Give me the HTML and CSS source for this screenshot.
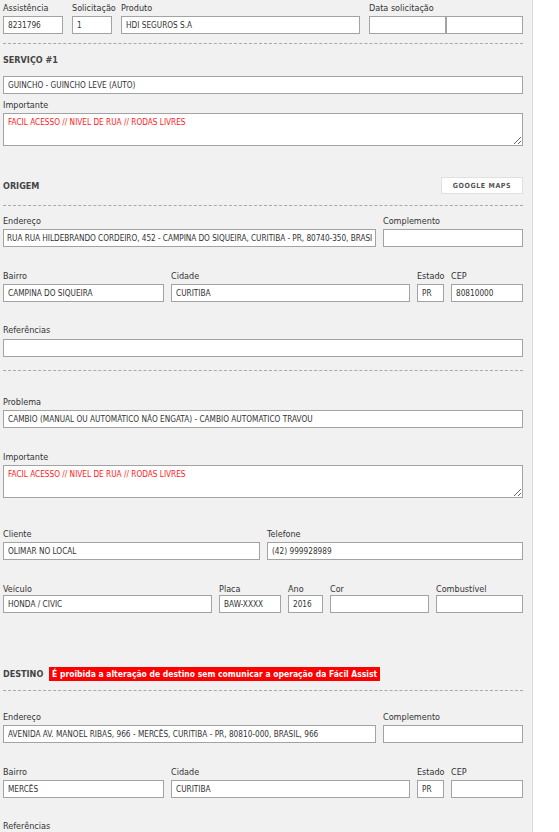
FILE: index.html
```html
<!DOCTYPE html>
<html lang="pt-BR">
<head>
    <meta charset="UTF-8">
    <meta name="viewport" content="width=device-width, initial-scale=1.0">
    <title>Atendimento</title>
    <link rel="stylesheet" href="styles.css">
</head>
<body>

    <div class="panel">
        <div class="row top">
            <div class="field w-assist">
                <label>Assistência</label>
                <input type="text" value="8231796" readonly>
            </div>
            <div class="field w-solic">
                <label>Solicitação</label>
                <input type="text" value="1" readonly>
            </div>
            <div class="field w-produto">
                <label>Produto</label>
                <input type="text" value="HDI SEGUROS S.A" readonly>
            </div>
            <div class="field grow">
                <label>Data solicitação</label>
                <div class="pair">
                    <input type="text" readonly>
                    <input type="text" readonly>
                </div>
            </div>
        </div>

        <hr class="dash after-top">

        <div class="section-title first">SERVIÇO #1</div>
        <input type="text" class="full" value="GUINCHO - GUINCHO LEVE (AUTO)" readonly>
        <div class="field mt-small">
            <label>Importante</label>
            <textarea class="alert" readonly>FACIL ACESSO // NIVEL DE RUA // RODAS LIVRES</textarea>
        </div>

        <div class="section-head">
            <span class="section-title">ORIGEM</span>
            <button class="maps">GOOGLE MAPS</button>
        </div>
        <hr class="dash">

        <div class="row m-9">
            <div class="field w-end">
                <label>Endereço</label>
                <input type="text" class="dense" value="RUA RUA HILDEBRANDO CORDEIRO, 452 - CAMPINA DO SIQUEIRA, CURITIBA - PR, 80740-350, BRASIL" readonly>
            </div>
            <div class="field grow">
                <label>Complemento</label>
                <input type="text" readonly>
            </div>
        </div>

        <div class="row m-23">
            <div class="field w-bairro">
                <label>Bairro</label>
                <input type="text" value="CAMPINA DO SIQUEIRA" readonly>
            </div>
            <div class="field grow">
                <label>Cidade</label>
                <input type="text" value="CURITIBA" readonly>
            </div>
            <div class="field w-uf">
                <label>Estado</label>
                <input type="text" value="PR" readonly>
            </div>
            <div class="field w-cep">
                <label>CEP</label>
                <input type="text" value="80810000" readonly>
            </div>
        </div>

        <div class="row m-22">
            <div class="field grow">
                <label class="loose">Referências</label>
                <input type="text" readonly>
            </div>
        </div>

        <hr class="dash spaced">

        <div class="row m-25">
            <div class="field grow">
                <label>Problema</label>
                <input type="text" value="CAMBIO (MANUAL OU AUTOMÁTICO NÃO ENGATA) - CAMBIO AUTOMATICO TRAVOU" readonly>
            </div>
        </div>

        <div class="row m-23">
            <div class="field grow">
                <label>Importante</label>
                <textarea class="alert" readonly>FACIL ACESSO // NIVEL DE RUA // RODAS LIVRES</textarea>
            </div>
        </div>

        <div class="row m-30">
            <div class="field w-cliente">
                <label>Cliente</label>
                <input type="text" value="OLIMAR NO LOCAL" readonly>
            </div>
            <div class="field grow">
                <label>Telefone</label>
                <input type="text" value="(42) 999928989" readonly>
            </div>
        </div>

        <div class="row m-23">
            <div class="field w-veiculo">
                <label class="tight">Veículo</label>
                <input type="text" value="HONDA / CIVIC" readonly>
            </div>
            <div class="field w-placa">
                <label class="tight">Placa</label>
                <input type="text" value="BAW-XXXX" readonly>
            </div>
            <div class="field w-ano">
                <label class="tight">Ano</label>
                <input type="text" value="2016" readonly>
            </div>
            <div class="field w-cor">
                <label class="tight">Cor</label>
                <input type="text" readonly>
            </div>
            <div class="field grow">
                <label class="tight">Combustível</label>
                <input type="text" readonly>
            </div>
        </div>

        <div class="section-head destino">
            <span class="section-title">DESTINO <span class="warn">É proibida a alteração de destino sem comunicar a operação da Fácil Assist</span></span>
        </div>
        <hr class="dash">

        <div class="row m-20">
            <div class="field w-end">
                <label>Endereço</label>
                <input type="text" value="AVENIDA AV. MANOEL RIBAS, 966 - MERCÊS, CURITIBA - PR, 80810-000, BRASIL, 966" readonly>
            </div>
            <div class="field grow">
                <label>Complemento</label>
                <input type="text" readonly>
            </div>
        </div>

        <div class="row m-23">
            <div class="field w-bairro">
                <label>Bairro</label>
                <input type="text" value="MERCÊS" readonly>
            </div>
            <div class="field grow">
                <label>Cidade</label>
                <input type="text" value="CURITIBA" readonly>
            </div>
            <div class="field w-uf">
                <label>Estado</label>
                <input type="text" value="PR" readonly>
            </div>
            <div class="field w-cep">
                <label>CEP</label>
                <input type="text" readonly>
            </div>
        </div>

        <div class="row m-22">
            <div class="field grow">
                <label class="loose">Referências</label>
                <input type="text" readonly>
            </div>
        </div>
    </div>

</body>
</html>
```

FILE: styles.css
```css
body {
    margin: 0;
    background-color: #fff;
    font-family: "DejaVu Sans Condensed", "DejaVu Sans", sans-serif;
    color: #333;
}
.panel {
    width: 533px;
    min-height: 832px;
    padding: 2px 9px 40px 3px;
    box-sizing: border-box;
    background-color: #f1f1f1;
    border-right: 1px solid #dcdcdc;
}
.row {
    display: flex;
    gap: 7px;
}
.row.top {
    gap: 9px;
}
.m-9 { margin-top: 9px; }
.m-20 { margin-top: 20px; }
.m-22 { margin-top: 22px; }
.m-23 { margin-top: 23px; }
.m-25 { margin-top: 25px; }
.m-30 { margin-top: 30px; }

.field label {
    display: block;
    font-size: 9px;
    line-height: 12px;
    margin-bottom: 2px;
    white-space: nowrap;
}
.field label.loose {
    margin-bottom: 3px;
}
.field label.tight {
    margin-bottom: 0;
}
.field.mt-small {
    margin-top: 5px;
}
input, textarea {
    display: block;
    width: 100%;
    height: 18px;
    box-sizing: border-box;
    margin: 0;
    padding: 0 4px;
    border: 1px solid #a3a3a3;
    background-color: #fff;
    font-family: inherit;
    font-size: 8.2px;
    line-height: normal;
    color: #333;
    outline: none;
}
input.dense {
    padding: 0 3px;
    letter-spacing: -0.05px;
}
input.full {
    width: 520px;
}
textarea {
    height: 33px;
    padding: 2px 4px;
    line-height: 12px;
    resize: vertical;
}
textarea.alert {
    color: #ff1a1a;
}
.grow {
    flex: 1;
    min-width: 0;
}
.w-assist { width: 60px; }
.w-solic { width: 40px; }
.w-produto { width: 239px; }
.pair {
    display: flex;
}
.pair input {
    flex: 1;
    min-width: 0;
}
.w-end { width: 373px; }
.w-bairro { width: 161px; }
.w-uf { width: 27px; }
.w-cep { width: 72px; }
.w-cliente { width: 257px; }
.w-veiculo { width: 209px; }
.w-placa { width: 62px; }
.w-ano { width: 35px; }
.w-cor { width: 99px; }

.dash {
    margin: 0;
    height: 0;
    width: 520px;
    border: none;
    border-top: 1px dashed #a8a8a8;
}
.dash.after-top {
    margin-top: 9px;
}
.dash.spaced {
    margin-top: 13px;
}
.section-title {
    font-size: 9px;
    font-weight: bold;
    line-height: 12px;
    color: #444;
}
.section-title.first {
    display: block;
    margin: 10px 0 10px;
}
.section-head {
    display: flex;
    justify-content: space-between;
    align-items: center;
    height: 17px;
    margin-top: 31px;
    margin-bottom: 11px;
}
.maps {
    width: 82px;
    height: 17px;
    padding: 0;
    background-color: #fff;
    border: 1px solid #e0e0e0;
    font-family: inherit;
    font-size: 7px;
    font-weight: bold;
    letter-spacing: 0.6px;
    color: #555;
    cursor: pointer;
}
.section-head.destino {
    margin-top: 52px;
    margin-bottom: 8px;
}
.warn {
    display: inline-block;
    margin-left: 3px;
    padding: 1px 3px;
    background-color: #f00;
    color: #fff;
    font-size: 8.5px;
    line-height: 12px;
}
```
